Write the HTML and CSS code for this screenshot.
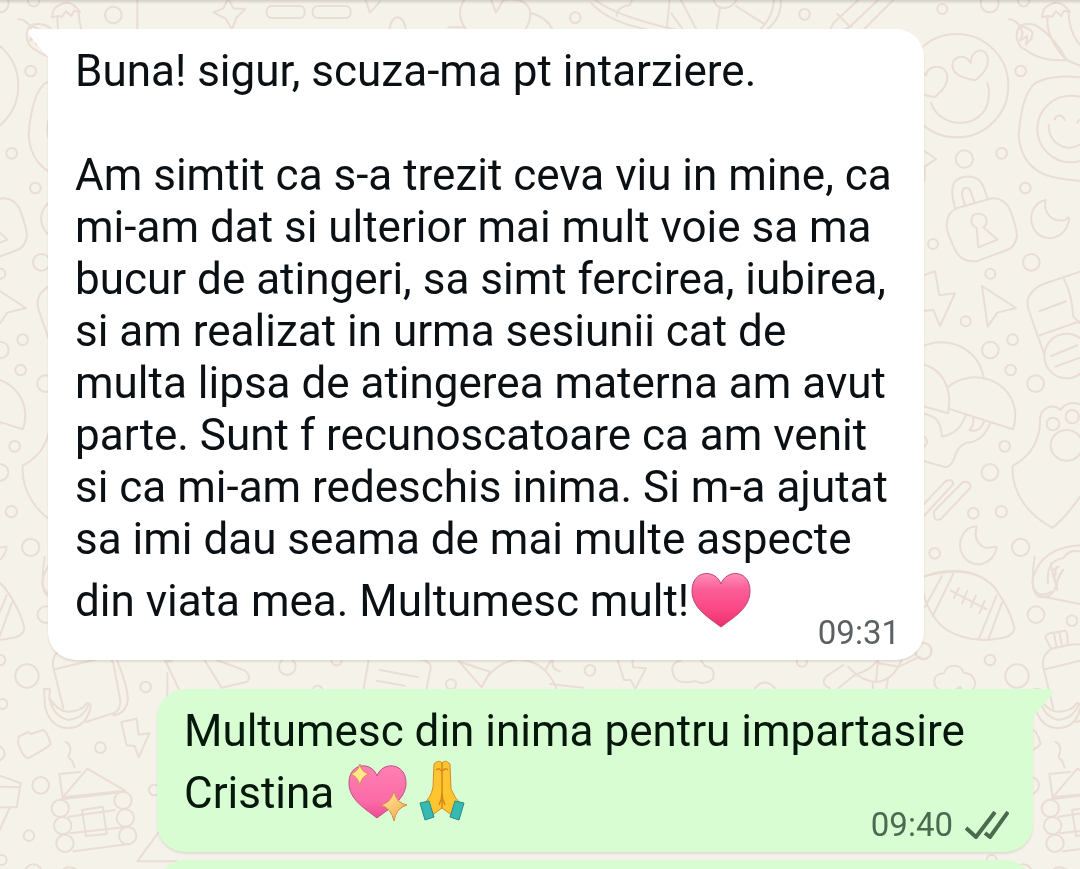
FILE: index.html
```html
<!DOCTYPE html>
<html lang="ro">
<head>
<meta charset="utf-8">
<meta name="viewport" content="width=device-width, initial-scale=1">
<title>Chat</title>
<link rel="stylesheet" href="styles.css">
</head>
<body>
<svg class="wallpaper" aria-hidden="true">
  <defs>
    <g id="doodles">
      <!-- smiley, peppers, lock, moon -->
      <g transform="translate(920 0) scale(.3333)">
        <circle cx="110" cy="257" r="155"/>
        <path d="M152 190C140 158 92 168 98 202C102 226 140 238 166 241C190 222 210 196 202 168C192 140 154 148 152 190Z"/>
        <path d="M18 226C20 195 76 188 82 228C84 252 64 276 45 291C18 288-20 276-26 250C-28 222 6 206 18 226Z"/>
        <path d="M33 308C60 390 190 390 205 300Q210 272 202 249"/>
        <circle cx="67" cy="27" r="15"/><circle cx="209" cy="10" r="27"/><circle cx="311" cy="2" r="17"/>
        <circle cx="302" cy="213" r="16"/><circle cx="133" cy="477" r="26"/><circle cx="245" cy="460" r="16"/>
        <circle cx="316" cy="564" r="16"/><circle cx="39" cy="732" r="15"/><circle cx="334" cy="787" r="25"/><circle cx="211" cy="821" r="15"/>
        <circle cx="550" cy="45" r="25"/><path d="M622-20V110"/>
        <path d="M266 58C285 58 290 68 300 78M300 78C280 104 292 140 318 150C350 176 400 184 440 180C420 140 380 92 345 75Q318 68 300 78ZM300 78L308 100L300 122L322 108L318 134L334 116L338 98Q330 84 300 78"/>
        <path d="M384 48C376 90 400 140 440 180Q490 205 560 215M446 34C446 110 480 150 560 190M384 48L366 52Q368 20 390 14Q410 2 432 16Q440 22 450 36L432 32L424 48L408 34L396 50Z"/>
        <path d="M560 240C440 225 385 225 345 250C310 280 300 350 296 405C300 480 345 520 400 532Q460 545 540 545"/>
        <circle cx="452" cy="387" r="100"/><path d="M386 375C388 460 490 462 500 400M404 358C410 342 428 342 434 360M472 368Q480 350 490 368"/>
        <path d="M105 624C90 570 92 535 135 530C185 526 192 560 202 596M135 616L126 585C124 560 148 554 154 580L163 607"/>
        <path d="M110 625L215 595Q250 592 268 625Q290 680 291 708Q286 740 262 750L175 782Q130 790 110 758Q80 700 80 675Q82 636 110 625Z"/>
        <path d="M170 684C146 672 150 640 176 641C204 642 206 672 190 682L233 719L175 742Z"/>
        <path d="M378 600C340 606 324 650 340 684C364 732 438 724 448 656Q444 648 436 660Q400 668 382 640Q370 620 378 600Z"/>
        <path d="M-20 430L48 477L14 500V540M0 830L45 814L58 886L105 880L60 978L40 930L0 934"/>
        <path d="M186 858L288 924L232 938L203 980Z"/>
        <path d="M480 815L370 852Q310 880 326 930Q350 1000 372 1060M432 838Q455 880 460 950L480 970M358 934L438 904M360 1006L480 964M394 1068L472 1036M406 1100L480 1073"/>
        <circle cx="440" cy="1068" r="67"/>
      </g>
      <!-- mushroom, paw, sticks, second moon -->
      <g transform="translate(920 290) scale(.3333)">
        <circle cx="137" cy="94" r="15"/><circle cx="211" cy="180" r="25"/><circle cx="278" cy="149" r="16"/><circle cx="272" cy="240" r="16"/>
        <circle cx="347" cy="281" r="25"/><circle cx="254" cy="469" r="16"/><circle cx="210" cy="547" r="25"/><circle cx="160" cy="670" r="16"/>
        <circle cx="244" cy="665" r="17"/><circle cx="302" cy="772" r="26"/><circle cx="44" cy="790" r="16"/><circle cx="5" cy="455" r="16"/>
        <path d="M-30 200C20 130 170 140 192 266M85 290C160 230 280 270 286 372Q286 400 278 418L85 356M-20 220C60 220 100 290 84 370L-20 340"/>
        <path d="M-20 365C50 374 62 390 66 440Q120 430 137 376M210 400Q190 455 140 458Q115 470 108 490Q98 528 78 532L-20 505M160 382Q162 410 148 420Q176 430 192 396"/>
        <path d="M0 655L75 575Q95 562 100 582L10 680M42 664L128 577Q150 570 152 592L64 686Q40 700 42 664Z"/>
        <path d="M170 710C130 708 108 760 128 795C155 842 224 826 230 770L196 774Q158 755 170 710Z"/>
        <path d="M495 350C460 330 435 340 422 360C400 340 362 350 360 388Q362 430 340 470Q325 500 278 528C274 600 315 670 398 714Q450 670 500 590"/>
        <circle cx="399" cy="402" r="19"/><circle cx="457" cy="380" r="20"/><ellipse cx="440" cy="466" rx="48" ry="46"/>
        <path d="M0 862C90 840 170 830 228 898M500 765Q400 765 360 820Q325 875 344 900M384 880Q378 810 430 805Q450 770 500 790M400 840L416 830M404 858L408 850M430 840Q405 870 412 900M344 900Q360 925 395 905"/>
      </g>
      <!-- football, cloud -->
      <g transform="translate(920 570) scale(.3333)">
        <path d="M-10 30C50 0 150-20 222 50C250 90 275 130 283 175Q280 200 240 205C170 220 80 200 45 145Q20 110 10 70M15 110L66 18M38 138L100 12M176 208L230 76M206 206L246 98M92 62L200 118M116 54L102 84M142 62L126 100M168 76L152 112M194 92L178 130"/>
        <circle cx="348" cy="134" r="25"/><circle cx="456" cy="152" r="16"/><circle cx="10" cy="243" r="25"/><circle cx="210" cy="270" r="16"/><circle cx="291" cy="318" r="35"/>
        <path d="M62 362C35 350 35 310 72 310C80 280 125 280 130 308C168 310 174 350 154 362Q135 372 120 350Q100 368 62 362Z"/>
        <path d="M344 -40Q330 60 350 75Q365 88 390 76Q420 50 400 20L392-20M410-10Q395 40 410 35L428 0M360 78L480 102"/>
      </g>
      <!-- jar, banana, cabin, bolt -->
      <g transform="translate(0 570) scale(.3333)">
        <path d="M170 210Q160 195 180 190L225 182Q236 190 232 226L184 236ZM192 190L200 232M208 188L216 228M184 236Q150 260 162 300L190 415M164 298L330 258M232 226Q310 210 340 280L360 385Q365 415 345 428L258 456M350 268Q380 340 384 385Q380 430 340 436"/>
        <path d="M132 356L150 358L148 385Q175 425 205 425Q245 425 260 400Q274 398 272 412C262 455 240 476 200 474Q150 470 135 410ZM148 385Q160 440 205 450Q250 445 266 404"/>
        <path d="M56 500L84 486L92 492L130 480Q140 482 152 522Q148 530 84 565Q68 560 54 520ZM197 516Q215 525 210 548Q200 565 215 570L224 592"/>
        <path d="M364 456L410 446L416 494L448 490L416 562L404 528L380 526Z"/>
        <path d="M188 682L178 612L240 606M188 682L262 596L375 662ZM184 688L350 668M206 740L345 720M210 790L385 770M220 844L386 822M246 720L308 710L320 792L258 798Z"/>
        <circle cx="181" cy="715" r="26"/><circle cx="188" cy="767" r="26"/><circle cx="195" cy="820" r="26"/><circle cx="369" cy="691" r="26"/><circle cx="376" cy="744" r="26"/><circle cx="383" cy="797" r="26"/>
        <circle cx="437" cy="351" r="16"/><circle cx="301" cy="533" r="16"/><circle cx="122" cy="646" r="25"/><circle cx="87" cy="797" r="16"/><circle cx="463" cy="660" r="16"/><circle cx="7" cy="402" r="15"/><circle cx="5" cy="870" r="15"/><circle cx="100" cy="908" r="25"/>
        <path d="M0 530Q18 540 12 560L-8 580M-20 610L62 640L50 712H-20M-10 650L55 652M28 716L-10 800M475 788L412 874H530M190 898Q205 886 230 898"/>
      </g>
      <!-- strip between the bubbles -->
      <g transform="translate(160 640) scale(.3333)">
        <path d="M15 60L60 155M22 100V170M130 55L185 143M170 60L255 92Q275 110 262 125L185 143M36 64H15M626 60L610 150M760 55Q815 60 812 84L800 145M660 90L775 112M650 122L734 137M895 62L965 142L990 96M900 66L992 96M965 142C1010 40 1140 20 1192 150M1155 90L1175 60M1200 95Q1170 85 1180 60"/>
        <circle cx="382" cy="80" r="25"/><circle cx="530" cy="60" r="16"/><circle cx="473" cy="152" r="15"/><circle cx="873" cy="133" r="15"/><circle cx="1290" cy="91" r="16"/>
        <path d="M1170 132L1270 143M1370 50L1392 120H1412L1426 146L1458 85L1420 82L1416 50"/>
        <path d="M1565 60Q1525 70 1542 108Q1550 130 1590 126Q1605 120 1620 128Q1640 132 1658 118Q1670 84 1635 78L1620 55M1785 145Q1815 110 1845 145M2050 75L1998 110Q1980 130 2010 145M2084 105L2035 145M2065 80Q2105 125 2150 126Q2200 122 2225 60M2155 60L2148 126M2150 65Q2130 90 2085 105M2155 70L2218 80M2218 80L2280 50M2138 130L2140 150M2184 118L2178 150"/>
        <circle cx="1926" cy="65" r="15"/><circle cx="2290" cy="33" r="24"/>
      </g>
      <!-- top strip -->
      <g transform="scale(.3333)">
        <path d="M685 -5L700 25L736 28L710 52L696 88L676 55L640 37L670 25Z"/>
        <rect x="800" y="18" width="114" height="36" rx="15"/><rect x="938" y="18" width="114" height="36" rx="15"/>
        <path d="M1095-5L1110 38L1140 5M1168 90Q1175 52 1192 52Q1212 52 1218 90"/>
        <path d="M1400 90Q1360 40 1400-10M1470-10L1488 38L1510 0Q1575-10 1590 30Q1595 60 1575 90M1590 38Q1640 50 1658 90M1345 82H1395"/>
        <circle cx="1726" cy="53" r="16"/><circle cx="2414" cy="43" r="16"/>
        <path d="M1775 10Q1830 70 1960 92M1780-5Q1840 48 2040 92M1850 48Q1850 20 1890 15L1900-10M2010-10L2000 90M2014 40L2050 90M2038-10L2090 90M2140-5Q2145 24 2174 24Q2205 20 2210-5M2160 24L2150 90M2208 18L2290 70M2342-10Q2350 50 2300 90M2322-10Q2324 45 2280 90"/>
        <path d="M2580-5L2500 70L2490 90M2512 42L2550 80L2640-5M2680 0L2590 90M2530 90L2555 78"/>
      </g>
    </g>
  </defs>
  <use href="#doodles" x="-990"/>
  <use href="#doodles"/>
  <use href="#doodles" x="990"/>
</svg>

<main class="chat">
  <article class="bubble incoming">
    <svg class="tail" viewBox="0 0 21 30" aria-hidden="true"><path d="M21 0H4Q-2 1 2 7L21 29Z"/></svg>
    <p class="text">Buna! sigur, scuza-ma pt intarziere.</p>
    <p class="text spaced">Am simtit ca s-a trezit ceva viu in mine, ca mi-am dat si ulterior mai mult voie sa ma bucur de atingeri, sa simt fercirea, iubirea, si am realizat in urma sesiunii cat de multa lipsa de atingerea materna am avut parte. Sunt f recunoscatoare ca am venit si ca mi-am redeschis inima. Si m-a ajutat sa imi dau seama de mai multe aspecte din viata mea. Multumesc mult!<svg class="emoji" viewBox="-1 0 65 64" role="img" aria-label="inima roz">
      <defs>
        <linearGradient id="pink" x1="0" y1="0" x2="0" y2="1"><stop offset="0" stop-color="#ff8fb9"/><stop offset=".3" stop-color="#fb5e97"/><stop offset=".7" stop-color="#fa4683"/><stop offset="1" stop-color="#e92f6c"/></linearGradient>
      </defs>
      <path d="M31 19C26 4 2 4 2 26C2 43 18 52 31 62C44 52 60 43 60 26C60 4 36 4 31 19Z" fill="url(#pink)" stroke="#b8487b" stroke-width="1"/>
    </svg></p>
    <footer class="meta"><time datetime="09:31">09:31</time></footer>
  </article>

  <article class="bubble outgoing">
    <svg class="tail" viewBox="0 0 21 30" aria-hidden="true"><path d="M0 0H17Q23 1 19 7L0 29Z"/></svg>
    <p class="text">Multumesc din inima pentru impartasire Cristina <svg class="emoji" viewBox="-1 0 65 64" role="img" aria-label="inima stralucitoare">
      <defs>
        <linearGradient id="rose" x1="0" y1="0" x2="0" y2="1"><stop offset="0" stop-color="#ff80b3"/><stop offset=".7" stop-color="#fb69a7"/><stop offset="1" stop-color="#ed4a90"/></linearGradient>
        <linearGradient id="gold" x1="0" y1="0" x2="1" y2="1"><stop offset="0" stop-color="#ffe57a"/><stop offset=".5" stop-color="#fff0a5"/><stop offset="1" stop-color="#f2a43d"/></linearGradient>
      </defs>
      <path d="M31 19C26 4 3 5 3 26C3 42 18 51 31 61C44 51 60 42 60 26C60 5 36 4 31 19Z" fill="url(#rose)" stroke="#bd5287" stroke-width="1"/>
      <path d="M14 7Q15 15 23 17Q15 19 14 29Q12 19 4 17Q12 15 14 7ZM48 34Q50 46 61 48Q50 51 48 64Q45 51 35 48Q45 46 48 34Z" fill="url(#gold)" stroke="#d98a55" stroke-width="1"/>
    </svg><svg class="emoji" viewBox="-1 0 65 64" role="img" aria-label="maini impreunate">
      <path d="M23 7Q28 2 31 6Q34 2 39 7L40 32Q44 42 50 47L42 59L31 51L20 59L12 47Q20 41 22 30Z" fill="#fdc52f" stroke="#d88b24" stroke-width="1"/>
      <path d="M31 6V51M25 13Q28 10 30 14M37 13Q34 10 32 14M28 48Q31 42 31 36Q31 42 34 48" fill="none" stroke="#d8861f" stroke-width="1.5"/>
      <path d="M9 46L18 44L23 60L14 63ZM53 46L44 44L39 60L48 63Z" fill="#35b9b0" stroke="#278c8c" stroke-width="1"/>
    </svg></p>
    <footer class="meta"><time datetime="09:40">09:40</time><svg class="ticks" viewBox="0 0 44 28" role="img" aria-label="livrat"><path d="M1 17L11 26L30 1M20 22L25 26L43 1"/></svg></footer>
  </article>

  <article class="bubble outgoing next"></article>
</main>
</body>
</html>
```

FILE: styles.css
```css
* {
  box-sizing: border-box;
}

body {
  margin: 0;
  background: #f5f2ea;
  font-family: Roboto, "Liberation Sans", sans-serif;
}

.wallpaper {
  position: fixed;
  inset: 0;
  width: 100%;
  height: 100%;
  fill: none;
  stroke: #e9ddd4;
  stroke-width: 6px;
  stroke-linejoin: round;
  stroke-linecap: round;
}

.chat {
  position: relative;
  display: flex;
  flex-direction: column;
  height: 100vh;
  overflow: hidden;
  padding: 29px 47px 0 48px;
  background: linear-gradient(rgba(90, 80, 70, .22), transparent 4px);
}

.bubble {
  position: relative;
  flex: none;
  padding: 16px 27px 10px;
  border-radius: 28px;
  box-shadow: 0 2px 2px rgba(80, 70, 60, .12);
}

.incoming {
  margin-right: 109px;
  border-top-left-radius: 0;
  background: #fff;
}

.outgoing {
  margin-top: 29px;
  margin-left: 109px;
  border-top-right-radius: 0;
  background: #d8fdd2;
}

.next {
  margin-top: 8px;
  height: 100px;
  border-top-right-radius: 28px;
}

.tail {
  position: absolute;
  top: 0;
  width: 21px;
  height: 30px;
}

.incoming .tail {
  left: -20px;
  fill: #fff;
}

.outgoing .tail {
  right: -20px;
  fill: #d8fdd2;
}

.text {
  margin: 0;
  color: #0b1014;
  font-size: 44px;
  line-height: 52px;
}

.spaced {
  margin-top: 52px;
}

.outgoing .text {
  color: #06170b;
}

.emoji {
  width: 65px;
  height: 64px;
  vertical-align: -13px;
}

.meta {
  display: flex;
  justify-content: flex-end;
  align-items: center;
  gap: 12px;
  margin-top: -13px;
  margin-right: -3px;
  color: #5c6062;
  font-size: 33px;
  line-height: 34px;
}

.outgoing .meta {
  color: #4c6a50;
}

.ticks {
  width: 44px;
  height: 28px;
  fill: none;
  stroke: #4c6a50;
  stroke-width: 4px;
}
```
